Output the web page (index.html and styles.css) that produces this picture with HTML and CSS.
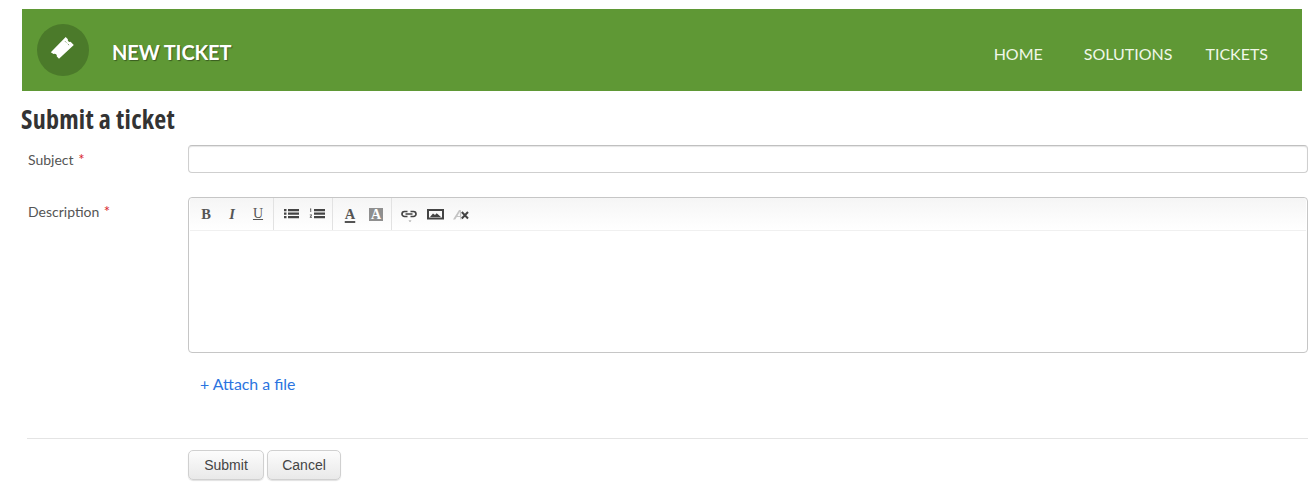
FILE: index.html
```html
<!DOCTYPE html>
<html lang="en">
<head>
<meta charset="utf-8">
<title>New Ticket</title>
<link rel="stylesheet" href="styles.css">
</head>
<body>
<header class="banner">
  <div class="logo">
    <svg width="28" height="28" viewBox="0 0 28 28"><path class="ticket" d="M1.800 16.200L16.700 1l2.200 2.200q-.5 1.200.4 2.100t2.300.5l3.200 3.300L10 22.800l-2.200-2.200q.3-1.300-.7-2.300T4.500 18z"/><path class="perf" d="M16 5.200l1.400 1.400M18.700 7.800l1.400 1.400"/></svg>
  </div>
  <h1 class="brand">NEW TICKET</h1>
  <nav class="nav">
    <a class="nav-home">HOME</a>
    <a class="nav-solutions">SOLUTIONS</a>
    <a class="nav-tickets">TICKETS</a>
  </nav>
</header>
<h2 class="title">Submit a ticket</h2>
<form class="form">
  <div class="row row-subject">
    <label class="label">Subject <span class="req">*</span></label>
    <div class="field"><div class="input"></div></div>
  </div>
  <div class="row">
    <label class="label label-desc">Description <span class="req">*</span></label>
    <div class="field">
      <div class="editor">
        <div class="toolbar">
          <div class="group group-first">
            <span class="tool tb">B</span>
            <span class="tool ti">I</span>
            <span class="tool tu">U</span>
          </div>
          <div class="group">
            <span class="slot"><svg width="16" height="16" viewBox="0 0 16 16"><path class="ink" d="M1 3h2.500v2.200H1zM5 3h11v2.200H5zM1 6.500h2.500v2.200H1zM5 6.500h11v2.200H5zM1 10h2.500v2.200H1zM5 10h11v2.200H5z"/></svg></span>
            <span class="slot"><svg width="16" height="16" viewBox="0 0 16 16"><path class="ink" d="M5 3h11v2.200H5zM5 6.500h11v2.200H5zM5 10h11v2.200H5z"/><path class="ink-thin" d="M1 2.500h1.200V6H1.300V3.400H1zM.8 8.500h2.200v.8l-1.200 1.500h1.200v.9H.8v-.8L2 9.300H.8z"/></svg></span>
          </div>
          <div class="group">
            <span class="tool color">A</span>
            <span class="slot"><span class="bg">A</span></span>
          </div>
          <div class="group group-last">
            <span class="slot"><svg width="16" height="16" viewBox="0 0 16 16"><path class="line" d="M6.500 5.500H3.500a2.500 2.500 0 0 0 0 5h3M9.500 5.500h3a2.500 2.500 0 0 1 0 5h-3M4.500 8h7"/><path class="caret" d="M7.500 14.500h3L9 16z"/></svg></span>
            <span class="slot"><svg width="18" height="16" viewBox="0 0 18 16"><path class="ink" fill-rule="evenodd" d="M1 3h17v10.500H1zM3 5v6.500h13V5z"/><path class="ink" d="M4 11l3-3.500 2 1.500 1.700-1.800L15 11z"/></svg></span>
            <span class="slot"><svg width="18" height="16" viewBox="0 0 18 16"><path class="pale" d="M1 13.500L7 4h1.800l.7 9.500H8.300L8.100 11H4.800l-1.600 2.500zM5.500 10h2.500l-.3-4.300z"/><path class="cross" d="M9.800 6l6.200 6.500M16 6l-6.200 6.500"/></svg></span>
          </div>
        </div>
      </div>
    </div>
  </div>
  <a class="attach">+ Attach a file</a>
  <div class="actions">
    <button class="btn btn-submit" type="button">Submit</button>
    <button class="btn btn-cancel" type="button">Cancel</button>
  </div>
</form>
</body>
</html>
```
FILE: styles.css
```css
* { box-sizing: border-box; }
html, body { margin: 0; padding: 0; background: #fff; overflow: hidden; }
body { height: 485px; padding: 9px 6px 0 0; font-family: "Lato", sans-serif; color: #444; }

.banner {
  display: flex; align-items: center;
  height: 82px; margin: 0 6px 0 22px; padding: 0 34px 0 15px;
  background: #5f9835;
}
.logo {
  width: 52px; height: 52px; border-radius: 50%;
  background: #4b7a2a;
  display: flex; align-items: center; justify-content: center;
}
.ticket { fill: #fff; }
.perf { fill: none; stroke: #8aa974; stroke-width: 1; }
.brand {
  margin: 4px 0 0 23px; font-size: 20px; font-weight: 700; color: #fff;
  letter-spacing: -0.1px; text-shadow: 1px 1px 1px rgba(0,0,0,.4);
}
.nav { margin-left: auto; display: flex; padding-top: 7px; font-size: 16px; color: #f0f7e8; }
.nav-home { margin-right: 41px; }
.nav-solutions { margin-right: 33px; }

.title {
  margin: 14px 0 0 21px; height: 40px;
  font-family: "Open Sans", sans-serif; font-stretch: 75%; font-size: 26px; font-weight: 700;
  letter-spacing: .25px; line-height: 28px; color: #333;
}

.form { display: block; }
.row { display: flex; }
.row-subject { margin-bottom: 24px; }
.label { width: 188px; padding: 7px 0 0 28px; font-size: 14px; line-height: 16px; color: #555; }
.req { color: #d8232a; margin-left: 1px; font-size: 15px; line-height: 1px; }
.field { flex: 1; }
.input {
  height: 28px; border: 1px solid #cfcfcf; border-top-color: #c0c0c0; border-radius: 4px;
  box-shadow: inset 0 1px 1px rgba(0,0,0,.1);
}
.editor { height: 156px; border: 1px solid #c6c6c6; border-radius: 4px; padding: 0 1px; }
.toolbar {
  display: flex; height: 33px;
  background: linear-gradient(#f5f5f5, #fff);
  border-bottom: 1px solid #f0f0f0;
  border-radius: 3px 3px 0 0;
}
.group {
  display: flex; align-items: center;
  padding: 0 2px 0 4px;
  border-right: 1px solid #e2e2e2;
}
.group-first { padding-left: 3px; }
.group-last { border-right: 0; }
.tool, .slot { width: 26px; display: flex; justify-content: center; align-items: center; }
.tool {
  font-family: "Liberation Serif", serif; font-size: 14.500px; line-height: 16px; color: #555;
}
.tb { font-weight: 700; }
.ti { font-style: italic; font-weight: 700; }
.tu { text-decoration: underline; font-size: 14px; }
.color { display: block; text-align: center; font-weight: 700; color: #555; text-decoration: underline 1.500px; text-underline-offset: 2px; }
.bg {
  width: 14px; height: 13px; background: #8f8f8f; color: #fff; text-align: center;
  font-family: "Liberation Serif", serif; font-weight: 700; font-size: 14px; line-height: 13px;
}
.slot svg { display: block; }
.ink { fill: #444; }
.ink-thin { fill: #555; }
.line { fill: none; stroke: #444; stroke-width: 1.700; }
.caret { fill: #999; }
.pale { fill: #c4c4c4; fill-rule: evenodd; }
.cross { fill: none; stroke: #444; stroke-width: 2; }

.attach {
  display: block; margin: 22px 0 0 200px; font-size: 15.900px; line-height: 18px; color: #2b74e0;
}
.actions {
  display: flex; gap: 3px;
  margin: 45px 0 0 27px; padding: 11px 0 0 161px;
  border-top: 1px solid #e4e4e4;
}
.btn {
  height: 30px; padding: 0;
  font-family: "Liberation Sans", sans-serif; font-size: 14px; color: #444;
  background: linear-gradient(#fcfcfc, #e9e9e9);
  border: 1px solid #d0d0d0; border-radius: 5px;
  box-shadow: 0 1px 1px rgba(0,0,0,.12);
}
.btn-submit { width: 76px; }
.btn-cancel { width: 74px; }
```
